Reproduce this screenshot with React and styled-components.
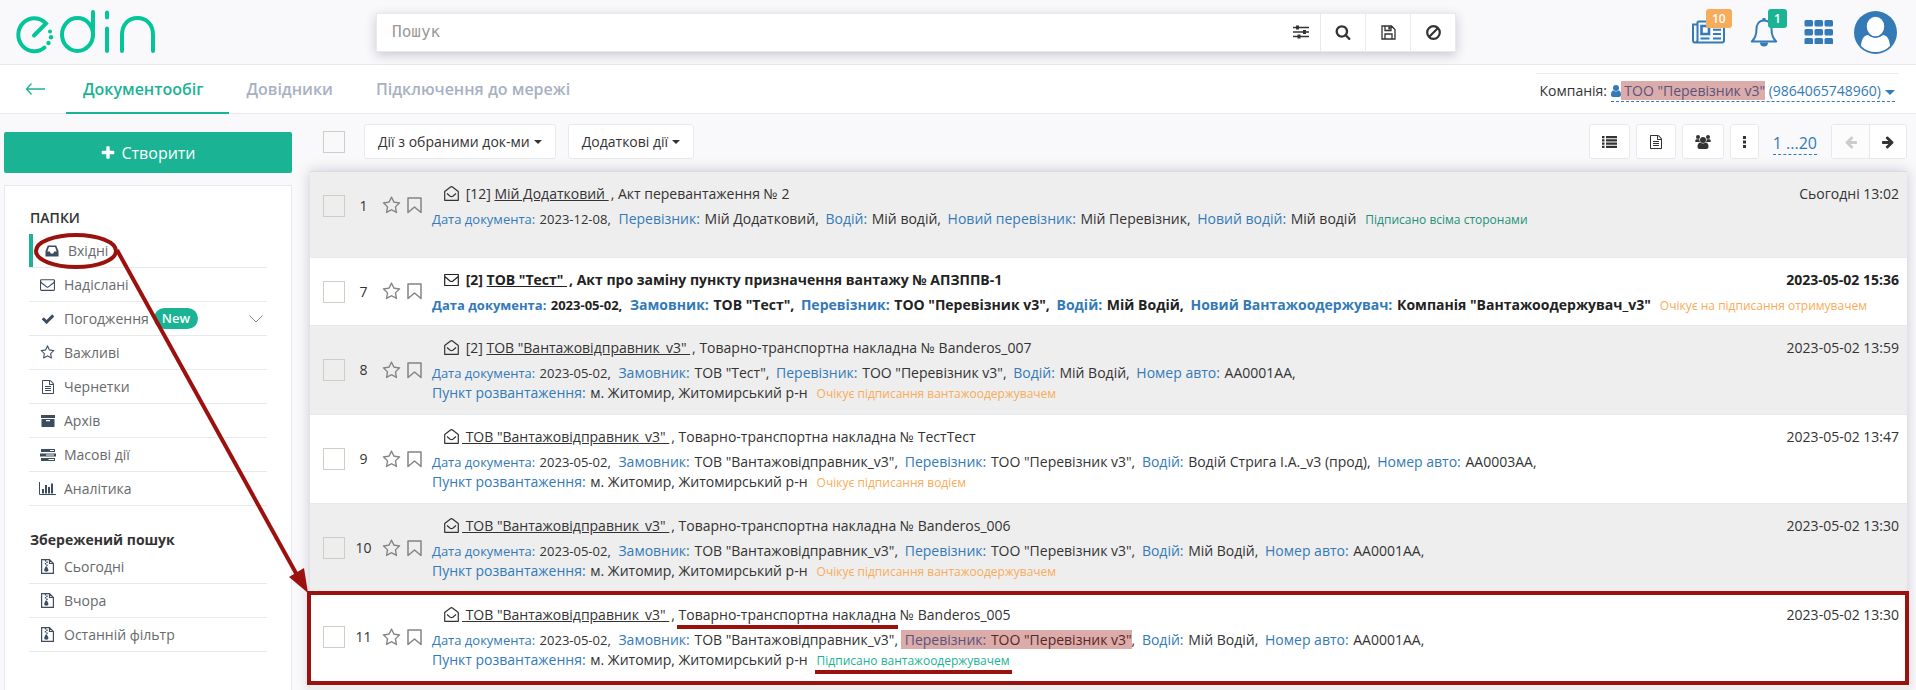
import React from "react";
import styled, { createGlobalStyle, css } from "styled-components";

const green = "#1ab394";
const blue = "#337ab7";
const line = "#e7eaec";
const red = "#9b110e";

const Global = createGlobalStyle`
  *, *::before, *::after { box-sizing: border-box; }
  body {
    margin: 0;
    background: #f9f9fb;
    color: #333;
    font-family: "Open Sans", "Noto Sans", sans-serif;
    font-size: 14px;
    line-height: 20px;
  }
  button, input { font: inherit; color: inherit; margin: 0; }
  button { cursor: pointer; padding: 0; }
  ul { list-style: none; margin: 0; padding: 0; }
  svg { display: block; flex: none; }
`;

/* ---------- icons ---------- */

const paths = {
  plus: "M1600 736v192q0 40-28 68t-68 28h-416v416q0 40-28 68t-68 28h-192q-40 0-68-28t-28-68v-416h-416q-40 0-68-28t-28-68v-192q0-40 28-68t68-28h416v-416q0-40 28-68t68-28h192q40 0 68 28t28 68v416h416q40 0 68 28t28 68z",
  check: "M1671 566q0 40-28 68l-724 724-136 136q-28 28-68 28t-68-28l-136-136-362-362q-28-28-28-68t28-68l136-136q28-28 68-28t68 28l294 295 656-657q28-28 68-28t68 28l136 136q28 28 28 68z",
  search: "M1216 832q0-185-131.5-316.5t-316.5-131.5-316.5 131.5-131.5 316.5 131.5 316.5 316.5 131.5 316.5-131.5 131.5-316.5zm512 832q0 52-38 90t-90 38q-54 0-90-38l-343-342q-179 124-399 124-143 0-273.5-55.5t-225-150-150-225-55.5-273.5 55.5-273.5 150-225 225-150 273.5-55.5 273.5 55.5 225 150 150 225 55.5 273.5q0 220-124 399l343 343q37 37 37 90z",
  envelope: "M1664 1504v-768q-32 36-69 66-268 206-426 338-51 43-83 67t-86.5 48.5-102.5 24.5h-2q-48 0-102.5-24.5t-86.5-48.5-83-67q-158-132-426-338-37-30-69-66v768q0 13 9.5 22.5t22.5 9.5h1472q13 0 22.5-9.5t9.5-22.5zm0-1051v-24.5l-.5-13-3-12.5-5.5-9-9-7.5-14-2.5h-1472q-13 0-22.5 9.5t-9.5 22.5q0 168 147 284 193 152 401 317 6 5 35 29.5t46 37.5 44.5 31.5 50.5 27.5 43 9h2q20 0 43-9t50.5-27.5 44.5-31.5 46-37.5 35-29.5q208-165 401-317 54-43 100.5-115.5t46.5-131.5zm128-37v1088q0 66-47 113t-113 47h-1472q-66 0-113-47t-47-113v-1088q0-66 47-113t113-47h1472q66 0 113 47t47 113z",
  file: "M1596 380q28 28 48 76t20 88v1152q0 40-28 68t-68 28h-1344q-40 0-68-28t-28-68v-1600q0-40 28-68t68-28h896q40 0 88 20t76 48zm-444-244v376h376q-10-29-22-41l-313-313q-12-12-41-22zm384 1528v-1024h-416q-40 0-68-28t-28-68v-416h-768v1536h1280zm-1024-864q0-14 9-23t23-9h704q14 0 23 9t9 23v64q0 14-9 23t-23 9h-704q-14 0-23-9t-9-23v-64zm736 224q14 0 23 9t9 23v64q0 14-9 23t-23 9h-704q-14 0-23-9t-9-23v-64q0-14 9-23t23-9h704zm0 256q14 0 23 9t9 23v64q0 14-9 23t-23 9h-704q-14 0-23-9t-9-23v-64q0-14 9-23t23-9h704z",
  star: "M1201 1004l306-297-422-62-189-382-189 382-422 62 306 297-73 421 378-199 377 199zm527-357q0 22-26 48l-363 354 86 500q1 7 1 20 0 50-41 50-19 0-40-12l-449-236-449 236q-22 12-40 12-21 0-31.5-14.5t-10.5-35.5q0-6 2-20l86-500-364-354q-25-27-25-48 0-37 56-46l502-73 225-455q19-41 49-41t49 41l225 455 502 73q56 9 56 46z",
  right: "M1600 960q0 54-37 91l-651 651q-39 37-91 37-51 0-90-37l-75-75q-38-38-38-91t38-91l293-293h-704q-52 0-84.5-37.5t-32.5-90.5v-128q0-53 32.5-90.5t84.5-37.5h704l-293-294q-38-36-38-90t38-90l75-75q38-38 90-38 53 0 91 38l651 651q37 35 37 90z",
};

const Glyph = ({ name, size = 14, flip }) => (
  <svg width={size} height={size} viewBox="0 0 1792 1792" fill="currentColor" aria-hidden="true">
    <path d={paths[name]} transform={flip ? "translate(1792 0) scale(-1 1)" : undefined} />
  </svg>
);

const Logo = () => (
  <svg width="142" height="46" viewBox="15 9 142 46" fill="none" stroke="#04c59a" strokeWidth="4" strokeLinecap="round" aria-label="edin">
    <path d="M34 35.500L46 23.500A16 16.500 0 1 0 44.500 47.500" />
    <ellipse cx="77.500" cy="34.500" rx="15.500" ry="16.500" />
    <path d="M93 12V36M107 12.500V17.500M107 28.500V51M122 51V35C122 24 129 18 137.500 18S153 24 153 35V51" />
    <g fill="#04c59a" stroke="none">
      <circle cx="50" cy="31.500" r="2" />
      <circle cx="51" cy="37.300" r="2.200" />
      <circle cx="48.500" cy="43" r="2.200" />
    </g>
  </svg>
);

const Sliders = () => (
  <svg width="16" height="16" viewBox="0 0 16 16" fill="none" stroke="currentColor" strokeWidth="1.500">
    <path d="M0 3.500h16M0 8h16M0 12.500h16" />
    <path d="M4.500 1.500v4M11.500 6v4M6 10.500v4" strokeWidth="3" />
  </svg>
);
const Floppy = () => (
  <svg width="15" height="15" viewBox="0 0 15 15" fill="none" stroke="currentColor" strokeWidth="1.300">
    <path d="M1 1h9.500L14 4.500V14H1zM4 14V9h7v5M4 1v4.500h6V1" />
    <path d="M8.300 1.500v3" strokeWidth="2" />
  </svg>
);
const Ban = () => (
  <svg width="15" height="15" viewBox="0 0 15 15" fill="none" stroke="currentColor" strokeWidth="2.200">
    <circle cx="7.500" cy="7.500" r="6.300" />
    <path d="M3 12L12 3" />
  </svg>
);
const Newspaper = () => (
  <svg width="34" height="24" viewBox="0 0 34 24" fill="none" stroke="currentColor" strokeWidth="2">
    <path d="M5.500 1.500H32V20.500Q32 22.500 30 22.500H3Q1 22.500 1 20V4.500H5.500M5.500 1.500V20Q5.500 22.500 3 22.500" />
    <path d="M9.500 6H17V14H9.500z" strokeWidth="2.600" />
    <path d="M21 5.500h8M21 9.700h8M21 14h8M8.500 18.500h9M21 18.500h8" />
  </svg>
);
const Bell = () => (
  <svg width="28" height="30" viewBox="0 0 28 30" fill="none" stroke="currentColor" strokeWidth="2">
    <path d="M14 3.500C8.500 3.500 6.500 8 6.500 12C6.500 18.500 5 21.500 1.800 24.500H26.200C23 21.500 21.500 18.500 21.500 12C21.500 8 19.500 3.500 14 3.500z" strokeLinejoin="round" />
    <path d="M14 1v2.500" strokeWidth="3" />
    <path d="M10 25.500a4 4 0 0 0 8 0z" fill="currentColor" stroke="none" />
  </svg>
);
const Apps = () => (
  <svg width="29" height="24" viewBox="0 0 29 24" fill="currentColor">
    {[0, 9, 18].map((y) =>
      [0, 10, 20].map((x) => <rect key={x + "-" + y} x={x + 0.5} y={y} width="8.500" height="6.500" rx="1.500" />)
    )}
  </svg>
);
const Avatar = () => (
  <svg width="43" height="43" viewBox="0 0 43 43">
    <circle cx="21.500" cy="21.500" r="21.500" fill={blue} />
    <path d="M7 35C7.500 28 10 24.500 14 24Q21.500 29.500 29 24C33 24.500 35.500 28 36 35Q30 41 21.500 41T7 35z" fill="#fff" />
    <ellipse cx="21.500" cy="15.500" rx="9.500" ry="10.500" fill="#fff" stroke={blue} strokeWidth="1.500" />
  </svg>
);
const BackArrow = () => (
  <svg width="20" height="12" viewBox="0 0 20 12" fill="none" stroke="currentColor" strokeWidth="1.300">
    <path d="M20 6H1.500M6.500 0.500L1.500 6L6.500 11.500" />
  </svg>
);
const Inbox = () => (
  <svg width="14" height="12" viewBox="0 0 14 12">
    <path d="M2.800 0.500H11.200L13.500 6V11.500H0.500V6zM4 2L2.300 6.500H4.800L5.800 8.500H8.200L9.200 6.500H11.700L10 2z" fill="currentColor" fillRule="evenodd" />
  </svg>
);
const Archive = () => (
  <svg width="14" height="12" viewBox="0 0 14 12" fill="currentColor">
    <path d="M0 0h14v3H0zM0.500 4h13v8h-13zM5 5v1.300h4V5z" fillRule="evenodd" />
  </svg>
);
const Server = () => (
  <svg width="16" height="12" viewBox="0 0 16 12">
    <path d="M1 0h14v3H1zM0 4.500h16v3H0zM1 9h14v3H1z" fill="currentColor" />
    <path d="M10 1.500h4M6 6h8M8.500 10.500h5.500" stroke="#fff" />
  </svg>
);
const BarChart = () => (
  <svg width="17" height="13" viewBox="0 0 17 13" fill="none" stroke="currentColor">
    <path d="M0.500 0V12.500H17" />
    <path d="M4 11.500V7M7 11.500V3M10 11.500V5M13 11.500V1.500" strokeWidth="2" />
  </svg>
);
const ZipFile = () => (
  <svg width="13" height="15" viewBox="0 0 13 15" fill="none" stroke="currentColor">
    <path d="M0.600 0.600H8.500L12.400 4.500V14.400H0.600zM8.500 0.600V4.500H12.400" strokeWidth="1.200" />
    <path d="M4.500 1v1.500M6 2.500V4M4.500 4v1.500M6 5.500V7" strokeWidth="1.400" />
    <path d="M4.500 7.500h1.500l1.500 3.500a2.200 1.800 0 1 1-4.400 0z" fill="currentColor" stroke="none" />
  </svg>
);
const Chevron = () => (
  <svg width="14" height="8" viewBox="0 0 14 8" fill="none" stroke="#888">
    <path d="M0.500 0.500L7 7L13.500 0.500" />
  </svg>
);
const ListIcon = () => (
  <svg width="15" height="12" viewBox="0 0 15 12" fill="currentColor">
    <path d="M0 0h2.500v2.200H0zM4 0h11v2.200H4zM0 3.300h2.500v2.200H0zM4 3.300h11v2.200H4zM0 6.500h2.500v2.200H0zM4 6.500h11v2.200H4zM0 9.800h2.500V12H0zM4 9.800h11V12H4z" />
  </svg>
);
const Users = () => (
  <svg width="16" height="14" viewBox="0 0 16 14" fill="currentColor">
    <circle cx="8" cy="5" r="3" />
    <circle cx="3" cy="2" r="2" />
    <circle cx="13" cy="2" r="2" />
    <path d="M0.300 7V5.500Q0.500 4 2 4.300H4.300Q4.200 6 5 7zM15.700 7V5.500Q15.500 4 14 4.300H11.700Q11.800 6 11 7zM2.500 12Q2.500 7.500 5.500 7.500Q8 9.500 10.500 7.500Q13.500 7.500 13.500 12Q13.500 14 11.500 14H4.500Q2.500 14 2.500 12z" />
  </svg>
);
const Dots = () => (
  <svg width="3" height="12" viewBox="0 0 3 12" fill="currentColor">
    <path d="M0 0h3v3H0zM0 4.500h3v3H0zM0 9h3v3H0z" />
  </svg>
);
const Person = styled.svg`
  display: inline-block;
  vertical-align: -1px;
`;
const Bookmark = () => (
  <svg width="15" height="17" viewBox="0 0 15 17" fill="none" stroke="currentColor" strokeWidth="1.500">
    <path d="M1 1H14V15.500L7.500 10L1 15.500z" strokeLinejoin="round" />
  </svg>
);
const TitleSvg = styled.svg`
  display: inline-block;
  margin-right: 3px;
  vertical-align: -2px;
`;
const MailIcon = ({ unread }) => (
  <TitleSvg width="15" height="15" viewBox="0 0 15 15" fill="none" stroke="currentColor" strokeWidth="1.200" strokeLinejoin="round">
    {unread ? (
      <path d="M0.700 2.500H14.300V13.500H0.700zM0.700 4.500L6 9Q7.500 10 9 9L14.300 4.500" />
    ) : (
      <path d="M0.700 14.300V5.500L6.200 1.200Q7.500 0.200 8.800 1.200L14.300 5.500V14.300zM3 7.500L6.200 10.200Q7.500 11 8.800 10.200L12 7.500" />
    )}
  </TitleSvg>
);
const Caret = styled.i`
  display: inline-block;
  margin-left: 4px;
  vertical-align: middle;
  border: solid transparent;
  border-width: ${(p) => (p.$large ? "5px 5px 0" : "4px 4px 0")};
  border-top-color: currentColor;
`;

/* ---------- page frame ---------- */

const Page = styled.div`
  position: relative;
  display: flex;
  flex-direction: column;
  min-height: 100vh;
`;

const Header = styled.header`
  display: grid;
  grid-template-columns: 376px 1fr 460px;
  align-items: center;
  height: 65px;
  border-bottom: 1px solid ${line};
`;
const LogoLink = styled.a`
  justify-self: start;
  padding-left: 15px;
`;
const SearchBar = styled.form`
  display: flex;
  height: 39px;
  background: #fff;
  border: 1px solid ${line};
  box-shadow: 0 3px 10px rgba(50, 50, 93, 0.25);
`;
const SearchInput = styled.input`
  flex: 1;
  min-width: 0;
  border: 0;
  outline: 0;
  padding: 0 15px;
  background: none;
  font-family: "DejaVu Sans Mono", monospace;
  font-size: 16px;
  &::placeholder { color: #999; opacity: 1; }
`;
const SearchButton = styled.button`
  display: grid;
  place-items: center;
  width: ${(p) => (p.$plain ? "38px" : "45px")};
  border: 0;
  border-left: ${(p) => (p.$plain ? "0" : `1px solid ${line}`)};
  background: none;
`;
const HeaderTools = styled.div`
  display: flex;
  align-items: center;
  justify-content: flex-end;
  padding-right: 19px;
  color: ${blue};
`;
const ToolButton = styled.button`
  position: relative;
  display: grid;
  place-items: center;
  margin-left: ${(p) => p.$gap}px;
  border: 0;
  background: none;
  color: inherit;
`;
const Badge = styled.span`
  position: absolute;
  top: ${(p) => p.$top}px;
  left: ${(p) => p.$left}px;
  padding: 0 6px;
  border-radius: 3px;
  background: ${(p) => p.$color};
  color: #fff;
  font-size: 12px;
  line-height: 19px;
  font-weight: 600;
`;

const Nav = styled.nav`
  display: flex;
  height: 49px;
  padding: 0 18px 0 25px;
  background: #fff;
  border-bottom: 1px solid ${line};
`;
const Back = styled.button`
  width: 41px;
  border: 0;
  background: none;
  color: ${green};
`;
const Tab = styled.a`
  padding: 0 26px 0 17px;
  height: 49px;
  line-height: 48px;
  font-size: 16px;
  font-weight: 600;
  text-decoration: none;
  color: ${(p) => (p.$active ? green : "#a7b1c2")};
  border-bottom: 2px solid ${(p) => (p.$active ? green : "transparent")};
`;
const Company = styled.div`
  align-self: flex-start;
  margin: 8px 0 0 auto;
  padding: 7px 3px 0 4px;
  border-top: 1px solid ${line};
`;
const CompanyLink = styled.a`
  display: inline-block;
  line-height: 20px;
  color: ${blue};
  text-decoration: none;
  border-bottom: 1px dashed ${blue};
`;
const Mark = styled.span`
  position: relative;
  &::after {
    content: "";
    position: absolute;
    inset: 0;
    background: rgba(155, 17, 14, 0.35);
  }
`;

const Body = styled.div`
  flex: 1;
  display: grid;
  grid-template-columns: 288px 1fr;
  column-gap: 18px;
  padding: 0 9px 0 4px;
`;

/* ---------- sidebar ---------- */

const Sidebar = styled.aside`
  display: flex;
  flex-direction: column;
  padding-top: 18px;
`;
const Create = styled.button`
  display: flex;
  align-items: center;
  justify-content: center;
  gap: 5px;
  height: 41px;
  margin-bottom: 12px;
  border: 0;
  border-radius: 2px;
  background: ${green};
  color: #fff;
  font-size: 16px;
`;
const Panel = styled.div`
  flex: 1;
  padding: 22px 24px 0;
  background: #fff;
  border: 1px solid #e7e8f2;
  border-bottom: 0;
`;
const PanelTitle = styled.h2`
  margin: 0;
  padding-left: 1px;
  font-size: 14px;
  line-height: 20px;
  font-weight: ${(p) => p.$weight};
  color: #333;
`;
const Folders = styled.ul`
  margin: ${(p) => p.$margin};
`;
const Folder = styled.li`
  border-bottom: 1px solid ${line};
  a {
    display: grid;
    grid-template-columns: 17px auto auto 1fr;
    align-items: center;
    height: 33px;
    padding: 0 4px 0 10px;
    color: #676a6c;
    text-decoration: none;
    border-left: ${(p) => (p.$active ? `4px solid ${green}` : "0")};
  }
`;
const FolderIcon = styled.span`
  display: grid;
  place-items: center;
  color: #3d4d5f;
`;
const FolderName = styled.span`
  padding-left: 8px;
`;
const NewTag = styled.span`
  margin-left: 5px;
  padding: 0 8px;
  border-radius: 11px;
  background: ${green};
  color: #fff;
  font-size: 13px;
  line-height: 21px;
  font-weight: 600;
`;
const FolderEnd = styled.span`
  justify-self: end;
`;

/* ---------- documents ---------- */

const Main = styled.main`
  display: flex;
  flex-direction: column;
  min-width: 0;
  padding-top: 10px;
`;
const Toolbar = styled.div`
  display: flex;
  align-items: center;
  height: 35px;
  margin-bottom: 12px;
  padding-left: 13px;
`;
const Tick = styled.input.attrs({ type: "checkbox" })`
  appearance: none;
  display: block;
  width: 22px;
  height: 22px;
  border: 1px solid #d2cdc4;
`;
const Control = styled.button`
  display: grid;
  grid-auto-flow: column;
  align-items: center;
  justify-content: center;
  height: 35px;
  padding: 0 ${(p) => (p.$wide ? 13 : 12)}px;
  margin-left: ${(p) => p.$gap || 6}px;
  border: 1px solid ${line};
  border-radius: 3px;
  background: #fff;
  white-space: nowrap;
`;
const Tools = styled.div`
  display: flex;
  align-items: center;
  margin-left: auto;
`;
const PageRange = styled.a`
  margin: 4px 14px 0;
  font-size: 16px;
  line-height: 22px;
  color: ${blue};
  text-decoration: none;
  border-bottom: 1px dashed ${blue};
`;
const Pager = styled.div`
  display: flex;
  border: 1px solid ${line};
  border-radius: 3px;
  background: #fff;
  button {
    display: grid;
    place-items: center;
    width: 37px;
    height: 33px;
    border: 0;
    background: none;
  }
  button:disabled { color: #ccc; background: #fcfcfc; }
  button + button { border-left: 1px solid ${line}; }
`;
const List = styled.div`
  flex: 1;
  display: flex;
  flex-direction: column;
  background: #eee;
  border-top: 1px solid #ddd;
  box-shadow: 0 0 12px rgba(50, 50, 93, 0.25);
`;
const Row = styled.article`
  position: relative;
  display: grid;
  grid-template-columns: 22px 37px 25px 25px 1fr;
  align-items: center;
  padding: 0 8px ${(p) => (p.$tall ? 18 : 0)}px 13px;
  background: ${(p) => (p.$even ? "#fff" : "#eee")};
  border-bottom: 1px solid ${line};
  ${(p) =>
    p.$framed &&
    css`
      &::after {
        content: "";
        position: absolute;
        inset: -2px -2px -4px -3px;
        border: 4px solid ${red};
        pointer-events: none;
      }
    `}
`;
const Num = styled.span`
  text-align: center;
`;
const IconButton = styled.button`
  justify-self: start;
  border: 0;
  background: none;
  color: #848484;
`;
const Content = styled.div`
  padding: 12px 0 10px;
  font-weight: ${(p) => (p.$unread ? 700 : 400)};
  color: ${(p) => (p.$unread ? "#222" : "#333")};
`;
const TitleLine = styled.div`
  display: flex;
  justify-content: space-between;
  height: 20px;
  margin-bottom: 4px;
  padding-left: 12px;
  white-space: pre;
`;
const Sender = styled.a`
  margin-right: 2px;
  color: inherit;
  text-decoration: underline;
`;
const Underlined = styled.span`
  position: relative;
  &::after {
    content: "";
    position: absolute;
    left: -2px;
    right: -2px;
    bottom: -5px;
    height: 4px;
    background: ${red};
  }
`;
const MetaLine = styled.div`
  line-height: 21px;
  height: 21px;
  white-space: nowrap;
  & + & { line-height: 20px; }
`;
const Key = styled.span`
  margin-right: 1px;
  color: ${blue};
`;
const PairBox = styled.span`
  margin-left: ${(p) => (p.$first ? 0 : 3)}px;
`;
const Small = styled.span`
  margin-right: 1px;
  font-size: 13px;
`;
const Status = styled.span`
  display: inline-block;
  margin-left: 9px;
  font-size: 12px;
  line-height: 16px;
  font-weight: 400;
  color: ${(p) => p.$color};
`;
const Overlay = styled.svg`
  position: absolute;
  top: 0;
  left: 0;
  pointer-events: none;
`;

const folders = [
  { name: "Вхідні", icon: <Inbox />, active: true },
  { name: "Надіслані", icon: <Glyph name="envelope" size={15} /> },
  { name: "Погодження", icon: <Glyph name="check" />, isNew: true },
  { name: "Важливі", icon: <Glyph name="star" size={15} /> },
  { name: "Чернетки", icon: <Glyph name="file" size={14} /> },
  { name: "Архів", icon: <Archive /> },
  { name: "Масові дії", icon: <Server /> },
  { name: "Аналітика", icon: <BarChart /> },
];
const saved = ["Сьогодні", "Вчора", "Останній фільтр"];

const sender = 'ТОВ "Вантажовідправник_v3"';
const carrier = ["Перевізник", 'ТОО "Перевізник v3"'];
const unloading = ["Пункт розвантаження", "м. Житомир, Житомирський р-н"];
const orange = "#f8ac59";

const documents = [
  {
    num: 1, count: "[12]", from: "Мій Додатковий", type: "Акт перевантаження", no: "2", time: "Сьогодні 13:02", date: "2023-12-08", tall: true,
    meta: [["Перевізник", "Мій Додатковий"], ["Водій", "Мій водій"], ["Новий перевізник", "Мій Перевізник"], ["Новий водій", "Мій водій"]],
    status: "Підписано всіма сторонами", color: "#1d907a",
  },
  {
    num: 7, count: "[2]", from: 'ТОВ "Тест"', type: "Акт про заміну пункту призначення вантажу", no: "АПЗППВ-1", time: "2023-05-02 15:36", date: "2023-05-02", unread: true,
    meta: [["Замовник", 'ТОВ "Тест"'], carrier, ["Водій", "Мій Водій"], ["Новий Вантажоодержувач", 'Компанія "Вантажоодержувач_v3"']],
    status: "Очікує на підписання отримувачем", color: orange,
  },
  {
    num: 8, count: "[2]", from: sender, type: "Товарно-транспортна накладна", no: "Banderos_007", time: "2023-05-02 13:59", date: "2023-05-02",
    meta: [["Замовник", 'ТОВ "Тест"'], carrier, ["Водій", "Мій Водій"], ["Номер авто", "АА0001АА"]],
    extra: unloading, status: "Очікує підписання вантажоодержувачем", color: orange,
  },
  {
    num: 9, from: sender, type: "Товарно-транспортна накладна", no: "ТестТест", time: "2023-05-02 13:47", date: "2023-05-02",
    meta: [["Замовник", sender], carrier, ["Водій", "Водій Стрига І.А._v3 (прод)"], ["Номер авто", "АА0003АА"]],
    extra: unloading, status: "Очікує підписання водієм", color: orange,
  },
  {
    num: 10, from: sender, type: "Товарно-транспортна накладна", no: "Banderos_006", time: "2023-05-02 13:30", date: "2023-05-02",
    meta: [["Замовник", sender], carrier, ["Водій", "Мій Водій"], ["Номер авто", "АА0001АА"]],
    extra: unloading, status: "Очікує підписання вантажоодержувачем", color: orange,
  },
  {
    num: 11, from: sender, type: "Товарно-транспортна накладна", no: "Banderos_005", time: "2023-05-02 13:30", date: "2023-05-02", framed: true,
    meta: [["Замовник", sender], carrier, ["Водій", "Мій Водій"], ["Номер авто", "АА0001АА"]],
    extra: unloading, status: "Підписано вантажоодержувачем", color: green,
  },
];

const Pair = ({ pair }) => (
  <>
    <Key>{pair[0]}:</Key> {pair[1]}
  </>
);

const DocumentRow = ({ doc, even }) => {
  const status = (
    <Status $color={doc.color}>
      {doc.framed ? <Underlined>{doc.status}</Underlined> : doc.status}
    </Status>
  );
  return (
    <Row $even={even} $tall={doc.tall} $framed={doc.framed}>
      <Tick aria-label={`Обрати документ ${doc.num}`} />
      <Num>{doc.num}</Num>
      <IconButton aria-label="Важливе"><Glyph name="star" size={19} /></IconButton>
      <IconButton aria-label="Закладка"><Bookmark /></IconButton>
      <Content $unread={doc.unread}>
        <TitleLine>
          <span>
            <MailIcon unread={doc.unread} />
            {doc.count ? ` ${doc.count} ` : ""}
            <Sender href="#">{doc.count ? `${doc.from} ` : ` ${doc.from} `}</Sender>
            {", "}
            {doc.framed ? <Underlined>{doc.type}</Underlined> : doc.type}
            {` № ${doc.no}`}
          </span>
          <time>{doc.time}</time>
        </TitleLine>
        <MetaLine>
          <Small><Key>Дата документа:</Key> {doc.date},</Small>
          {doc.meta.map((pair, i) => {
            const last = i === doc.meta.length - 1 && !doc.extra;
            const marked = doc.framed && pair === carrier;
            return (
              <PairBox key={pair[0]}>
                {marked ? <Mark>&nbsp;<Pair pair={pair} /></Mark> : <>&nbsp;<Pair pair={pair} /></>}
                {last ? "" : ","}
              </PairBox>
            );
          })}
          {!doc.extra && status}
        </MetaLine>
        {doc.extra && (
          <MetaLine>
            <PairBox $first><Pair pair={doc.extra} /></PairBox>
            {status}
          </MetaLine>
        )}
      </Content>
    </Row>
  );
};

export default function App() {
  return (
    <Page>
      <Global />
      <Header>
        <LogoLink href="#"><Logo /></LogoLink>
        <SearchBar>
          <SearchInput placeholder="Пошук" aria-label="Пошук" />
          <SearchButton $plain type="button" aria-label="Налаштування"><Sliders /></SearchButton>
          <SearchButton type="button" aria-label="Шукати"><Glyph name="search" size={16} /></SearchButton>
          <SearchButton type="button" aria-label="Зберегти"><Floppy /></SearchButton>
          <SearchButton type="button" aria-label="Очистити"><Ban /></SearchButton>
        </SearchBar>
        <HeaderTools>
          <ToolButton $gap={0} aria-label="Новини"><Newspaper /><Badge $color={orange} $top={-11} $left={14}>10</Badge></ToolButton>
          <ToolButton $gap={24} aria-label="Сповіщення"><Bell /><Badge $color={green} $top={-8} $left={18}>1</Badge></ToolButton>
          <ToolButton $gap={26} aria-label="Сервіси"><Apps /></ToolButton>
          <ToolButton $gap={21} aria-label="Профіль"><Avatar /></ToolButton>
        </HeaderTools>
      </Header>

      <Nav>
        <Back aria-label="Назад"><BackArrow /></Back>
        <Tab href="#" $active>Документообіг</Tab>
        <Tab href="#">Довідники</Tab>
        <Tab href="#">Підключення до мережі</Tab>
        <Company>
          Компанія:{" "}
          <CompanyLink href="#">
            <Person width="10" height="12" viewBox="0 0 10 12" fill="currentColor">
              <circle cx="5" cy="3" r="3" />
              <path d="M0 10Q0 5.500 2.500 5.500Q5 7.500 7.500 5.500Q10 5.500 10 10Q10 12 8 12H2Q0 12 0 10z" />
            </Person>
            <Mark>&nbsp;{carrier[1]}</Mark> (9864065748960)
            <Caret $large />
          </CompanyLink>
        </Company>
      </Nav>

      <Body>
        <Sidebar>
          <Create><Glyph name="plus" size={16} />Створити</Create>
          <Panel>
            <PanelTitle $weight={600}>ПАПКИ</PanelTitle>
            <Folders $margin="6px 0 24px">
              {folders.map((f) => (
                <Folder key={f.name} $active={f.active}>
                  <a href="#">
                    <FolderIcon>{f.icon}</FolderIcon>
                    <FolderName>{f.name}</FolderName>
                    {f.isNew && <NewTag>New</NewTag>}
                    {f.isNew && <FolderEnd><Chevron /></FolderEnd>}
                  </a>
                </Folder>
              ))}
            </Folders>
            <PanelTitle $weight={700}>Збережений пошук</PanelTitle>
            <Folders $margin="0">
              {saved.map((name) => (
                <Folder key={name}>
                  <a href="#">
                    <FolderIcon><ZipFile /></FolderIcon>
                    <FolderName>{name}</FolderName>
                  </a>
                </Folder>
              ))}
            </Folders>
          </Panel>
        </Sidebar>

        <Main>
          <Toolbar>
            <Tick aria-label="Обрати всі" />
            <Control $wide $gap={19}>Дії з обраними док-ми<Caret /></Control>
            <Control $wide $gap={12}>Додаткові дії<Caret /></Control>
            <Tools>
              <Control aria-label="Список"><ListIcon /></Control>
              <Control aria-label="Документ"><Glyph name="file" /></Control>
              <Control aria-label="Користувачі"><Users /></Control>
              <Control aria-label="Більше"><Dots /></Control>
              <PageRange href="#">1 ...20</PageRange>
              <Pager>
                <button disabled aria-label="Попередня"><Glyph name="right" flip /></button>
                <button aria-label="Наступна"><Glyph name="right" /></button>
              </Pager>
            </Tools>
          </Toolbar>
          <List>
            {documents.map((doc, i) => (
              <DocumentRow key={doc.num} doc={doc} even={i % 2 === 1} />
            ))}
          </List>
        </Main>
      </Body>

      <Overlay width="312" height="600" viewBox="0 0 312 600" fill="none" stroke={red} strokeWidth="4" aria-hidden="true">
        <ellipse cx="76" cy="251" rx="40" ry="16" />
        <path d="M117 250L297 575" />
        <path d="M289 577L304 568L308 593z" fill={red} stroke="none" />
      </Overlay>
    </Page>
  );
}
